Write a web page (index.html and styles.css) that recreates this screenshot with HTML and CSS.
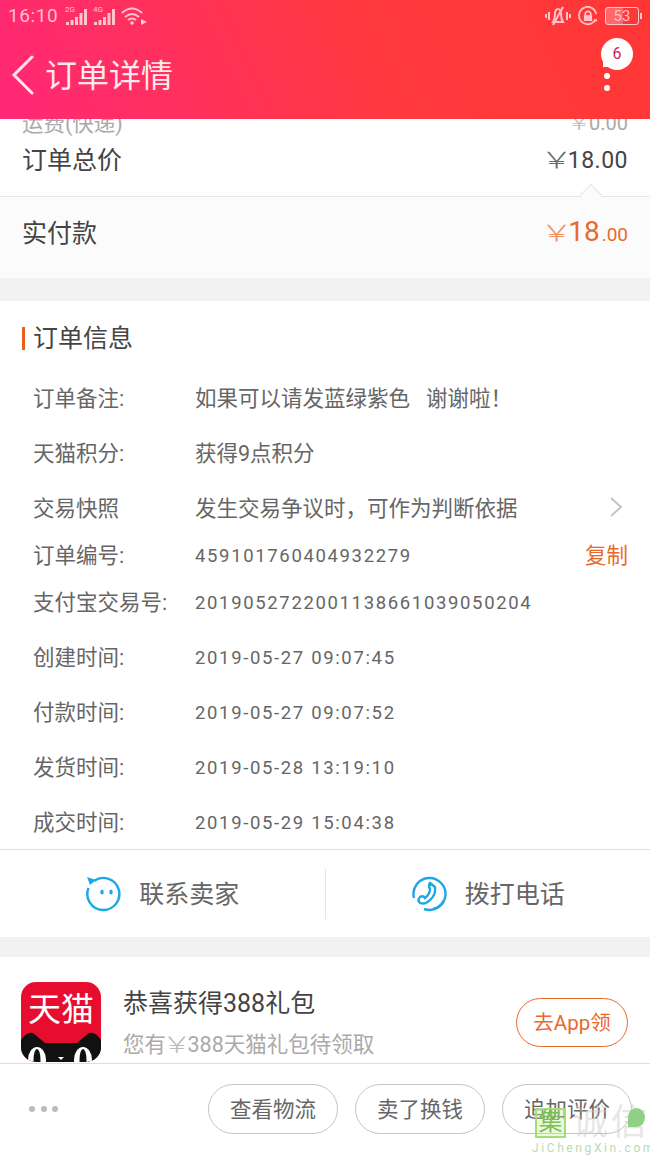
FILE: index.html
```html
<!DOCTYPE html>
<html lang="zh-CN">

<head>
    <meta charset="UTF-8">
    <meta name="viewport" content="width=device-width, initial-scale=1.0">
    <title>订单详情</title>
    <link rel="stylesheet" href="styles.css">
</head>

<body>
    <div class="app">
        <header class="top">
            <div class="status">
                <span class="clock">16:10</span>
                <svg class="sig" viewBox="0 0 24 22" width="24" height="22">
                    <text x="0" y="7" class="sig-label">2G</text>
                    <rect x="1" y="17" width="3" height="3" />
                    <rect x="5.5" y="15" width="3" height="5" />
                    <rect x="10" y="12" width="3" height="8" />
                    <rect x="14.5" y="8" width="3" height="12" />
                    <rect x="19" y="4" width="3" height="16" />
                </svg>
                <svg class="sig" viewBox="0 0 24 22" width="24" height="22">
                    <text x="0" y="7" class="sig-label">4G</text>
                    <rect x="1" y="17" width="3" height="3" />
                    <rect x="5.5" y="15" width="3" height="5" />
                    <rect x="10" y="12" width="3" height="8" />
                    <rect x="14.5" y="8" width="3" height="12" />
                    <rect x="19" y="4" width="3" height="16" />
                </svg>
                <svg class="wifi" viewBox="0 0 28 20" width="28" height="20">
                    <path d="M1 7 Q11 -2 21 7" />
                    <path d="M4 11 Q11 5 18 11" />
                    <path d="M7 14 Q11 11 15 14" />
                    <circle cx="11" cy="17" r="1.8" class="fill" />
                    <path d="M20 13 L26 16 L20 19 Z" class="fill" />
                </svg>
                <span class="status-right">
                    <svg class="mute" viewBox="0 0 26 22" width="26" height="22">
                        <path d="M8 17 Q10 14 10 9 Q10 4 13 4 Q16 4 16 9 Q16 14 18 17 Z" />
                        <path d="M18 2 L8 20" />
                        <path d="M4 7 V15 M1 9 V13 M22 7 V15 M25 9 V13" />
                    </svg>
                    <svg class="lock" viewBox="0 0 22 22" width="20" height="20">
                        <path d="M19 15 A9.5 9.5 0 1 1 20 9" />
                        <rect x="6.5" y="10" width="9" height="6.5" class="fill" />
                        <path d="M8 10 V8 Q11 4 14 8 V10" />
                        <path d="M17 15 L21 14 L20.5 18 Z" class="fill" />
                    </svg>
                    <span class="battery"><span class="battery-level"></span><span class="battery-num">53</span></span>
                </span>
            </div>
            <div class="nav">
                <svg class="back" viewBox="0 0 24 40" width="24" height="40">
                    <path d="M21 2 L3 20 L21 38" />
                </svg>
                <h1>订单详情</h1>
                <div class="more">
                    <span class="more-dot"></span>
                    <span class="more-dot"></span>
                    <span class="badge">6</span>
                </div>
            </div>
        </header>

        <main class="scroll">
            <section class="sum">
                <div class="sum-row sum-row-ship"><span>运费(快递)</span><span class="ship-price"><span class="yen">￥</span>0.00</span></div>
                <div class="sum-row sum-row-total"><span>订单总价</span><span class="sum-price"><span class="yen">￥</span>18.00</span></div>
            </section>
            <section class="paid">
                <span class="paid-caret"></span>
                <span>实付款</span>
                <span class="paid-price"><span class="yen">￥</span>18<small>.00</small></span>
            </section>

            <section class="info">
                <h2>订单信息</h2>
                <div class="info-row"><span class="info-key">订单备注:</span><span class="info-val">如果可以请发蓝绿紫色&nbsp;&nbsp;&nbsp;谢谢啦！</span></div>
                <div class="info-row"><span class="info-key">天猫积分:</span><span class="info-val">获得9点积分</span></div>
                <div class="info-row"><span class="info-key">交易快照</span><span class="info-val">发生交易争议时，可作为判断依据</span>
                    <svg class="chev" viewBox="0 0 14 22" width="14" height="22"><path d="M2 2 L12 11 L2 20" /></svg>
                </div>
                <div class="info-row info-row-short"><span class="info-key">订单编号:</span><span class="info-val num">459101760404932279</span><span class="copy">复制</span></div>
                <div class="info-row"><span class="info-key">支付宝交易号:</span><span class="info-val num">2019052722001138661039050204</span></div>
                <div class="info-row"><span class="info-key">创建时间:</span><span class="info-val num">2019-05-27 09:07:45</span></div>
                <div class="info-row"><span class="info-key">付款时间:</span><span class="info-val num">2019-05-27 09:07:52</span></div>
                <div class="info-row"><span class="info-key">发货时间:</span><span class="info-val num">2019-05-28 13:19:10</span></div>
                <div class="info-row"><span class="info-key">成交时间:</span><span class="info-val num">2019-05-29 15:04:38</span></div>
            </section>

            <section class="contact">
                <div class="contact-item">
                    <svg viewBox="0 0 36 36" width="36" height="36">
                        <path d="M9 5 A16 16 0 1 1 3.5 12" />
                        <path d="M2 1 L11 4 L5 9 Z" class="fill" />
                        <ellipse cx="17" cy="16" rx="1.7" ry="2.6" class="fill" />
                        <ellipse cx="26" cy="16" rx="1.7" ry="2.6" class="fill" />
                    </svg>
                    <span>联系卖家</span>
                </div>
                <div class="contact-item">
                    <svg viewBox="0 0 36 36" width="36" height="36">
                        <path d="M13 33 A16 16 0 1 0 3 22" />
                        <path d="M22 33 A16 16 0 0 0 33 24" />
                        <path d="M19 7 L24 11 Q25 19 19 24 Q14 29 9 27 Q6 24 9 21 Q12 19 14 22 Q19 18 19 13 Q17 10 19 7 Z" />
                    </svg>
                    <span>拨打电话</span>
                </div>
            </section>

            <section class="promo">
                <div class="tmall">
                    <span class="tmall-name">天猫</span>
                    <svg class="tmall-cat" viewBox="0 0 80 30" width="80" height="30">
                        <path d="M0 8 Q6 -1 12 1 L24 11 H56 L68 1 Q74 -1 80 8 V30 H0 Z" />
                        <ellipse cx="16" cy="28" rx="9" ry="13" class="eye" />
                        <ellipse cx="62" cy="28" rx="9" ry="13" class="eye" />
                        <ellipse cx="16" cy="28" rx="3.5" ry="11" />
                        <ellipse cx="62" cy="28" rx="3.5" ry="11" />
                        <path d="M37 25 H43 L40 28 Z" class="eye" />
                    </svg>
                </div>
                <div class="promo-text">
                    <div class="promo-title">恭喜获得388礼包</div>
                    <div class="promo-sub">您有<span class="yen">￥</span>388天猫礼包待领取</div>
                </div>
                <button class="promo-btn">去App领</button>
            </section>
        </main>

        <footer class="bar">
            <div class="dots"><span></span><span></span><span></span></div>
            <button class="bar-btn">查看物流</button>
            <button class="bar-btn">卖了换钱</button>
            <button class="bar-btn">追加评价</button>
        </footer>

        <div class="mark">
            <div class="mark-top"><span class="mark-box">集</span><span class="mark-word">诚信</span><span class="mark-leaf"></span></div>
            <div class="mark-url">JiChengXin.com</div>
        </div>
    </div>
</body>

</html>
```

FILE: styles.css
```css
* {
    box-sizing: border-box;
}

body {
    margin: 0;
    background-color: #fff;
    font-family: "Roboto", "Noto Sans CJK SC", sans-serif;
    color: #444;
}

.app {
    position: relative;
    display: flex;
    flex-direction: column;
    height: 1155px;
    overflow: hidden;
}

/* Шапка */
.top {
    height: 119px;
    flex-shrink: 0;
    background: linear-gradient(65deg, #ff2878 0%, #ff3a3c 60%, #ff3636 100%);
    color: #fff;
}

.status {
    display: flex;
    align-items: center;
    gap: 4px;
    height: 33px;
    padding: 0 9px 2px 8px;
    color: #ffc0c8;
}

.clock {
    font-size: 19px;
    letter-spacing: 0.6px;
    margin-right: 3px;
}

.sig rect,
.fill {
    fill: #ffc4cc;
    stroke: none;
}

.sig-label {
    font-size: 8px;
    fill: #ffc4cc;
}

.wifi path,
.mute path,
.lock path,
.lock rect {
    fill: none;
    stroke: #ffc4cc;
    stroke-width: 2;
}

.wifi .fill,
.lock .fill {
    fill: #ffc4cc;
    stroke: none;
}

.status-right {
    display: flex;
    align-items: center;
    gap: 7px;
    margin-left: auto;
}

.battery {
    position: relative;
    width: 34px;
    height: 18px;
    margin-right: 2px;
    border: 1px solid #ffc4cc;
    border-radius: 3px;
    font-size: 15px;
    line-height: 16px;
    text-align: center;
}

.battery::after {
    content: "";
    position: absolute;
    right: -4px;
    top: 5px;
    width: 2px;
    height: 6px;
    background-color: #ffc4cc;
}

.battery-level {
    position: absolute;
    left: 0;
    top: 0;
    bottom: 0;
    width: 53%;
    background-color: rgba(255, 255, 255, 0.25);
}

.battery-num {
    position: relative;
}

.nav {
    display: flex;
    align-items: center;
    height: 86px;
    padding: 0 0 6px 11px;
}

.back {
    margin-top: 4px;
    fill: none;
    stroke: #ffe4e8;
    stroke-width: 3;
}

.back path {
    stroke-linecap: round;
}

.nav h1 {
    margin: 0 0 0 10px;
    font-size: 32px;
    font-weight: 400;
    color: #ffe9ec;
}

.more {
    position: relative;
    display: flex;
    flex-direction: column;
    gap: 6px;
    margin: 18px 40px 0 auto;
}

.more-dot {
    width: 6px;
    height: 6px;
    border-radius: 50%;
    background-color: #fff;
}

.badge {
    position: absolute;
    left: -3px;
    top: -35px;
    width: 32px;
    height: 32px;
    border-radius: 50%;
    background-color: #fff;
    color: #d81b60;
    font-size: 16px;
    line-height: 32px;
    text-align: center;
}

.badge::after {
    content: "";
    position: absolute;
    left: 2px;
    bottom: 3px;
    width: 6px;
    height: 6px;
    background-color: #fff;
}

/* Прокручиваемая часть */
.scroll {
    flex: 1;
    min-height: 0;
    overflow: hidden;
    background-color: #f2f2f2;
}

.sum {
    display: flow-root;
    height: 78px;
    padding: 0 22px;
    border-bottom: 1px solid #e6e6e6;
    background-color: #fff;
}

.sum-row {
    display: flex;
    justify-content: space-between;
    align-items: center;
}

.sum-row-ship {
    height: 30px;
    margin-top: -13px;
    font-size: 21.5px;
    color: #aaa;
}

.ship-price {
    font-size: 20px;
}

.sum-row-total {
    height: 44px;
    font-size: 25px;
    color: #444;
}

.sum-price {
    font-size: 23px;
    letter-spacing: 0.5px;
}

/* Знак юаня шире, чем в шрифте */
.yen {
    display: inline-block;
    font-family: "Noto Sans CJK SC", sans-serif;
    font-size: 1em;
    font-weight: 300;
    letter-spacing: 0;
    transform: scaleX(1.4);
    opacity: 0.8;
}

.paid {
    position: relative;
    display: flex;
    justify-content: space-between;
    height: 81px;
    padding: 16px 22px 0;
    background-color: #fbfbfb;
    font-size: 25px;
    color: #444;
}

.paid-caret {
    position: absolute;
    right: 51px;
    top: -10px;
    width: 16px;
    height: 16px;
    transform: rotate(45deg);
    background-color: #fbfbfb;
    border-left: 1px solid #e6e6e6;
    border-top: 1px solid #e6e6e6;
}

.paid-price {
    margin-top: -2px;
    color: #e8692c;
    font-size: 28px;
    line-height: 40px;
}

.paid-price .yen {
    font-size: 23px;
    color: #ee7a3e;
}

.paid-price small {
    margin-left: 2px;
    font-size: 19px;
}

.info {
    margin-top: 23px;
    height: 549px;
    padding-top: 17px;
    border-bottom: 1px solid #dedede;
    background-color: #fff;
}

.info h2 {
    position: relative;
    display: flex;
    align-items: center;
    height: 36px;
    margin: 0 0 15px 22px;
    padding-left: 11px;
    font-size: 25px;
    font-weight: 400;
    color: #444;
}

.info h2::before {
    content: "";
    position: absolute;
    left: 0;
    top: 9px;
    width: 3px;
    height: 23px;
    background-color: #e8601c;
}

.info-row {
    display: flex;
    align-items: center;
    height: 55px;
    padding: 0 22px 0 33px;
    font-size: 21.5px;
    color: #666;
}

.info-row-short {
    height: 39px;
}

.info-key {
    width: 162px;
    flex-shrink: 0;
    white-space: nowrap;
}

.info-val {
    flex: 1;
    white-space: nowrap;
}

.num {
    padding-top: 5px;
    font-size: 18.5px;
    letter-spacing: 1.65px;
}

.chev {
    fill: none;
    stroke: #c4c4c4;
    stroke-width: 2;
    margin-right: 5px;
}

.copy {
    color: #e8692c;
}

.contact {
    display: flex;
    align-items: center;
    height: 87px;
    background-color: #fff;
}

.contact-item {
    flex: 1;
    display: flex;
    align-items: center;
    justify-content: center;
    gap: 18px;
    height: 50px;
    font-size: 25px;
    color: #666;
}

.contact-item span {
    margin-bottom: 4px;
}

.contact-item + .contact-item {
    border-left: 1px solid #e6e6e6;
}

.contact-item svg {
    fill: none;
    stroke: #1ea7e6;
    stroke-width: 2.4;
}

.contact-item .fill {
    fill: #1ea7e6;
    stroke: none;
}

.promo {
    display: flex;
    align-items: flex-start;
    height: 126px;
    border-top: 20px solid #f2f2f2;
    padding: 25px 22px 0 21px;
    background-color: #fff;
}

.tmall {
    position: relative;
    width: 80px;
    height: 80px;
    flex-shrink: 0;
    border-radius: 15px;
    background-color: #e60d2e;
    overflow: hidden;
    color: #fff;
    text-align: center;
}

.tmall-name {
    display: block;
    font-size: 33px;
    line-height: 56px;
    white-space: nowrap;
}

.tmall-cat {
    position: absolute;
    left: 0;
    bottom: 0;
    fill: #111;
}

.tmall-cat .eye {
    fill: #fff;
}

.promo-text {
    flex: 1;
    margin-left: 22px;
}

.promo-title {
    margin-top: 4px;
    font-size: 25px;
    line-height: 36px;
    color: #444;
}

.promo-sub {
    margin-top: 4px;
    font-size: 21.5px;
    line-height: 34px;
    color: #aaa;
    white-space: nowrap;
}

.promo-btn {
    width: 112px;
    height: 49px;
    margin-top: 16px;
    padding: 0 0 3px;
    border: 1px solid #e8692c;
    border-radius: 25px;
    background-color: #fff;
    color: #e8692c;
    font-family: inherit;
    font-size: 20.5px;
}

/* Нижняя панель */
.bar {
    display: flex;
    align-items: center;
    gap: 17px;
    height: 92px;
    flex-shrink: 0;
    padding: 0 18px 2px 29px;
    border-top: 1px solid #dedede;
    background-color: #fff;
}

.dots {
    display: flex;
    gap: 5.5px;
    margin-right: auto;
}

.dots span {
    width: 6px;
    height: 6px;
    border-radius: 50%;
    background-color: #bbb;
}

.bar-btn {
    width: 130px;
    height: 50px;
    padding: 0 0 3px;
    border: 1px solid #c4c4c4;
    border-radius: 25px;
    background-color: #fff;
    color: #666;
    font-family: inherit;
    font-size: 21.5px;
}

/* Водяной знак */
.mark {
    position: absolute;
    right: 0;
    bottom: 0;
    width: 118px;
    height: 50px;
}

.mark-top {
    display: flex;
    align-items: center;
    height: 30px;
    margin-top: 3px;
    padding-left: 3px;
}

.mark-box {
    width: 32px;
    height: 30px;
    border: 2px solid #a6dc78;
    background-color: rgba(190, 240, 150, 0.35);
    color: #7fbf55;
    font-size: 24px;
    line-height: 25px;
    text-align: center;
}

.mark-word {
    margin-left: 6px;
    font-size: 36px;
    line-height: 30px;
    letter-spacing: 3px;
    color: rgba(200, 200, 200, 0.45);
    white-space: nowrap;
}

.mark-leaf {
    position: absolute;
    right: 5px;
    top: 3px;
    width: 17px;
    height: 19px;
    border-radius: 50% 50% 50% 0;
    background-color: #8fcf86;
}

.mark-url {
    margin-top: 3px;
    font-size: 12px;
    line-height: 14px;
    letter-spacing: 2.6px;
    color: #b7dcae;
    white-space: nowrap;
}
```
